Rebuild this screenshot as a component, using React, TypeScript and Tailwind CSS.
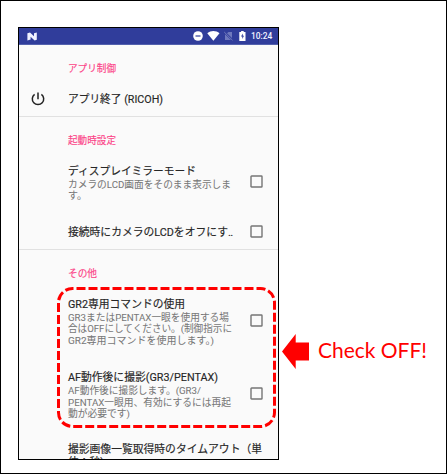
import type { ReactNode } from "react";

const androidFont = "font-['Roboto','Noto_Sans_CJK_JP',sans-serif]";

function Line({ children, width, className }: { children: ReactNode; width: number; className: string }) {
  return (
    <svg className="block overflow-visible" width={width} height="11.4">
      <text className={className} x="0" y="9.6" textLength={width} lengthAdjust="spacingAndGlyphs">
        {children}
      </text>
    </svg>
  );
}

function Category({ children, width }: { children: string; width: number }) {
  return (
    <div className="flex h-[14px] items-center">
      <Line width={width} className="fill-[#fb4588] stroke-[#fb4588] stroke-[0.15px] text-[9.8px]">{children}</Line>
    </div>
  );
}

type Text = [string, number];

function Item({ title, summary = [], checkbox = false }: { title: Text; summary?: Text[]; checkbox?: boolean }) {
  return (
    <div className="flex items-center justify-between pr-[15px]">
      <div>
        <div className="flex h-[15px] items-center">
          <Line width={title[1]} className="fill-[#262626] stroke-[#262626] stroke-[0.15px] text-[11px]">{title[0]}</Line>
        </div>
        {summary.map(([text, width]) => (
          <Line key={text} width={width} className="fill-[#777] stroke-[#777] stroke-[0.05px] text-[9.7px]">{text}</Line>
        ))}
      </div>
      {checkbox && (
        <svg className="shrink-0" width="13" height="13" viewBox="0 0 13 13">
          <rect x="1" y="1" width="11" height="11" rx="0.6" fill="none" stroke="#757575" strokeWidth="1.4" />
        </svg>
      )}
    </div>
  );
}

function StatusBar() {
  return (
    <div className="flex h-[17px] items-center border-b border-[#5361ad] bg-[#303d9b] pl-2 pr-[6px]">
      <svg width="11" height="9" viewBox="0 0 11 9">
        <path d="M.4 1.2 3 .5 7 4.2V1.2L9.8.6V7.8L7.6 8.5 3.6 4.8V7.6L.4 8.4Z" fill="#f0f2ff" />
      </svg>
      <div className="ml-auto flex items-center">
        <svg width="10" height="10" viewBox="0 0 10 10">
          <circle cx="5" cy="5" r="4.8" fill="#fff" />
          <path d="M2.5 5h5" stroke="#303d9b" strokeWidth="1.2" />
        </svg>
        <svg className="ml-[4px]" width="13" height="10" viewBox="0 0 13 10">
          <path d="M.3 2.2C3.8-.6 9-.6 12.5 2.2L6.4 9.8Z" fill="#fff" />
        </svg>
        <svg className="ml-[4px]" width="9" height="10" viewBox="0 0 9 10">
          <path d="M3 2.2 4.5 1H8V7Z M1 3.2 7 9H1Z" fill="#6f79bd" />
          <path d="M.2 1 8.5 9.3" stroke="#6f79bd" />
        </svg>
        <svg className="ml-[6px]" width="7" height="10" viewBox="0 0 7 10">
          <path d="M.3 1h1.8V0h2.6v1h1.8v9H.3Z" fill="#fff" />
          <path d="M3.8 2.4 2 5.6h1.3v2.5L5 4.8H3.8Z" fill="#303d9b" />
        </svg>
        <svg className="ml-[5px] overflow-visible" width="21" height="10">
          <text x="0" y="8.4" textLength="21.3" lengthAdjust="spacingAndGlyphs" className="fill-[#f2f3ff] text-[8.3px] font-medium">10:24</text>
        </svg>
      </div>
    </div>
  );
}

export default function App() {
  return (
    <div className="relative h-[474px] w-[447px] overflow-hidden border border-black bg-white pl-[17px] pt-[26px]">
      <div className={`h-[433px] w-[261px] overflow-hidden border border-black bg-[#fafafa] ${androidFont}`}>
        <StatusBar />
        <section className="h-[72px] border-b border-[#e1e1e1] pl-[49px] pt-4">
          <Category width={48}>アプリ制御</Category>
          <div className="-ml-[38px] mt-4 flex items-center">
            <svg className="ml-px mr-[23px]" width="14" height="14" viewBox="0 0 14 14" fill="none" stroke="#222" strokeWidth="1.5">
              <path d="M7 .5v6.7M3.6 2.3a5.7 5.7 0 1 0 6.8 0" />
            </svg>
            <Item title={["アプリ終了 (RICOH)", 95]} />
          </div>
        </section>
        <section className="h-[133px] border-b border-[#e1e1e1] pl-[49px] pt-4">
          <Category width={48}>起動時設定</Category>
          <div className="mt-4 flex flex-col gap-[23px]">
            <Item title={["ディスプレイミラーモード", 128]} summary={[["カメラのLCD画面をそのまま表示しま", 163], ["す。", 19]]} checkbox />
            <Item title={["接続時にカメラのLCDをオフにす‥", 165]} checkbox />
          </div>
        </section>
        <section className="pl-[49px] pt-4">
          <Category width={29}>その他</Category>
          <div className="mt-4 flex flex-col gap-[24px]">
            <Item title={["GR2専用コマンドの使用", 117]} summary={[["GR3またはPENTAX一眼を使用する場", 161], ["合はOFFにしてください。(制御指示に", 164], ["GR2専用コマンドを使用します。)", 146]]} checkbox />
            <Item title={["AF動作後に撮影(GR3/PENTAX)", 150]} summary={[["AF動作後に撮影します。(GR3/", 133], ["PENTAX一眼用、有効にするには再起", 163], ["動が必要です)", 62]]} checkbox />
            <div className="-mt-px">
              <Item title={["撮影画像一覧取得時のタイムアウト（単", 194]} />
              <div className="-mt-[2px]">
                <Item title={["位：秒)", 36]} />
              </div>
            </div>
          </div>
        </section>
      </div>
      <svg className="absolute -left-px -top-px" width="447" height="474" viewBox="0 0 447 474">
        <path d="M72.5 288.5H260.5A14 14 0 0 1 274.5 302.5V412.5A14 14 0 0 1 260.5 426.5H72.5A14 14 0 0 1 58.5 412.5V302.5A14 14 0 0 1 72.5 288.5Z" fill="none" stroke="#f00" strokeWidth="3" strokeDasharray="9 3" strokeDashoffset="8" />
        <path d="M282 351.5 295.7 334v8.5H309v18H295.7V369Z" fill="#f00" />
        <text x="318" y="358" textLength="109" lengthAdjust="spacingAndGlyphs" className="fill-[#f00] font-['Lato',sans-serif] text-[21px]">Check OFF!</text>
      </svg>
    </div>
  );
}
